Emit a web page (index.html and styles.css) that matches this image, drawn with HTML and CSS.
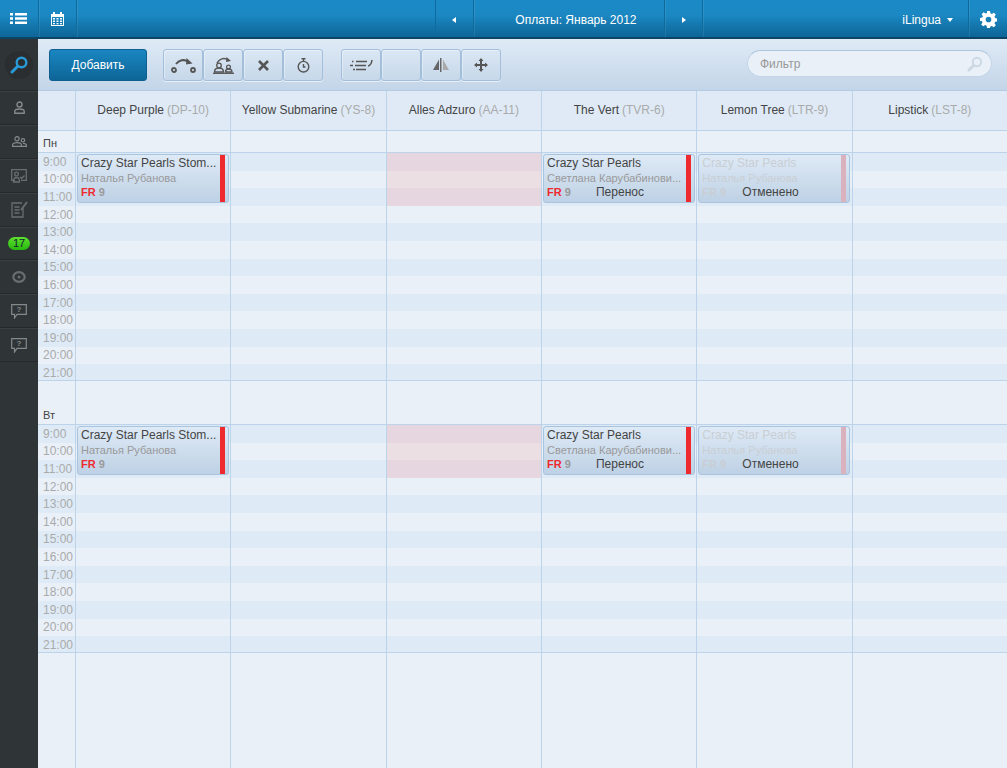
FILE: index.html
```html
<!DOCTYPE html>
<html lang="ru">
<head>
  <meta charset="UTF-8">
  <meta name="viewport" content="width=device-width, initial-scale=1.0">
  <title>Оплаты: Январь 2012</title>
  <link rel="stylesheet" href="styles.css">
</head>
<body>
  <header class="topbar">
    <div class="top-cell top-first">
      <svg width="17" height="11" viewBox="0 0 17 11" fill="#fff"><path d="M0 0h3v2.500H0zM5 0h12v2.500H5zM0 4.200h3v2.600H0zM5 4.200h12v2.600H5zM0 8.500h3V11H0zM5 8.500h12V11H5z"/></svg>
    </div>
    <div class="top-cell">
      <svg width="13" height="14" viewBox="0 0 13 14" fill="#fff"><path d="M2 0h2v2h5V0h2v2h2v12H0V2h2zM1 5v8h11V5zM2 6h2v1.500H2zM5.500 6h2v1.500h-2zM9 6h2v1.500H9zM2 8.500h2V10H2zM5.500 8.500h2V10h-2zM9 8.500h2V10H9zM2 11h2v1.300H2zM5.500 11h2v1.300h-2zM9 11h2v1.300H9z" fill-rule="evenodd"/></svg>
    </div>
    <div class="top-space"></div>
    <div class="top-cell"><span class="arrow-left"></span></div>
    <div class="top-cell top-title">Оплаты: Январь 2012</div>
    <div class="top-cell"><span class="arrow-right"></span></div>
    <div class="top-cell top-user">iLingua <span class="caret"></span></div>
    <div class="top-cell">
      <svg width="17" height="17" viewBox="0 0 24 24" fill="#fff"><path fill-rule="evenodd" d="M10 0h4l.7 3.300 2 .8L19.500 2.300l2.800 2.800-1.800 2.800.8 2 3.300.7v4l-3.300.7-.8 2 1.800 2.800-2.800 2.800-2.800-1.800-2 .8L14 24h-4l-.7-3.300-2-.8-2.800 1.800-2.800-2.800 1.800-2.800-.8-2L0 14v-4l3.300-.7.8-2-1.800-2.800 2.800-2.800 2.800 1.800 2-.8zM12 8a4 4 0 1 0 0 8 4 4 0 0 0 0-8z"/></svg>
    </div>
  </header>

  <div class="layout">
    <nav class="sidebar">
      <div class="side-logo">
        <span class="logo-disc">
          <svg width="20" height="20" viewBox="0 0 20 20" fill="none"><circle cx="12.500" cy="7.500" r="4.800" stroke="#2a9ad6" stroke-width="2.400"/><path d="M8.500 11.500L3 17" stroke="#2a9ad6" stroke-width="3" stroke-linecap="round"/></svg>
        </span>
      </div>
      <div class="side-item">
        <svg width="11" height="13" viewBox="0 0 11 13" fill="none" stroke="#85898b" stroke-width="1.400"><circle cx="5.500" cy="3.500" r="2.500"/><path d="M.8 12.200v-2c0-1.500 1.800-2.200 4.700-2.200s4.700 .7 4.700 2.200v2z"/></svg>
      </div>
      <div class="side-item">
        <svg width="15" height="11" viewBox="0 0 15 11" fill="none" stroke="#85898b" stroke-width="1.200"><circle cx="5" cy="2.800" r="2.100"/><path d="M.6 10.400V9c0-1.500 1.500-2.400 4.400-2.400S9.400 7.500 9.400 9v1.400z"/><circle cx="11" cy="4.300" r="1.700"/><path d="M9.400 10.400h5V9.200c0-1.200-1.200-1.900-3.400-1.900"/></svg>
      </div>
      <div class="side-item">
        <svg width="16" height="14" viewBox="0 0 16 14" fill="none" stroke="#696e70" stroke-width="1.300"><path d="M4 11.300H.7V.7h14.600v10.600H10"/><circle cx="5.500" cy="5" r="1.900"/><path d="M2.500 13c0-3 1-4.500 3-4.500S8.500 10 8.500 13zM9 8l1.500 1.500 3-3"/></svg>
      </div>
      <div class="side-item">
        <svg width="17" height="17" viewBox="0 0 17 17" fill="none" stroke="#696e70" stroke-width="1.300"><path d="M12 7v9H1V2h10M3.500 6h5M3.500 9h5M3.500 12h5"/><path d="M10 9l6-8" stroke-width="1.800"/></svg>
      </div>
      <div class="side-item"><span class="count-badge">17</span></div>
      <div class="side-item">
        <svg width="14" height="12" viewBox="0 0 14 12" fill="none" stroke="#696e70"><ellipse cx="7" cy="6" rx="5.700" ry="4.800" stroke-width="2.200"/><circle cx="7" cy="6" r="1.500" fill="#696e70" stroke="none"/></svg>
      </div>
      <div class="side-item">
        <svg width="16" height="15" viewBox="0 0 16 15" fill="none" stroke="#85898b" stroke-width="1.200"><path d="M.7.700h14.600v9.600H6L3.500 14v-3.700H.7z"/><text class="q-mark" x="8" y="8.300">?</text></svg>
      </div>
      <div class="side-item">
        <svg width="16" height="15" viewBox="0 0 16 15" fill="none" stroke="#85898b" stroke-width="1.200"><path d="M.7.700h14.600v9.600H6L3.500 14v-3.700H.7z"/><text class="q-mark" x="8" y="8.300">?</text></svg>
      </div>
    </nav>

    <div class="content">
      <div class="toolbar">
        <button class="btn-add">Добавить</button>
        <div class="btn-group">
          <button class="btn-tool">
            <svg width="25" height="15" viewBox="0 0 25 15" fill="none" stroke="#555"><circle cx="3" cy="12" r="2" stroke-width="1.800"/><circle cx="22" cy="12" r="2" stroke-width="1.800"/><path d="M5 6c3-4 8-5 12-2.500" stroke-width="2"/><path d="M15.500 0l6 5.500-6.500 1z" fill="#555" stroke="none"/></svg>
          </button>
          <button class="btn-tool">
            <svg width="21" height="17" viewBox="0 0 21 17" fill="none" stroke="#555"><path d="M4 6c2-4 7-6 11-3" stroke-width="1.500"/><path d="M13.500 0l4.500 4-5 1z" fill="#555" stroke="none"/><circle cx="6" cy="8.500" r="2.300" stroke-width="1.300"/><path d="M1.500 15c0-3 2-4 4.500-4s4.500 1 4.500 4z" stroke-width="1.300"/><circle cx="15.500" cy="10" r="1.900" stroke-width="1.300"/><path d="M12.500 15c0-2.500 1-3 3-3s3.500 .5 3.500 3z" stroke-width="1.300"/><path d="M0 16.300h21" stroke-width="1.300"/></svg>
          </button>
          <button class="btn-tool">
            <svg width="11" height="11" viewBox="0 0 11 11" stroke="#555" stroke-width="2.600"><path d="M1 1l9 9M10 1l-9 9"/></svg>
          </button>
          <button class="btn-tool">
            <svg width="13" height="15" viewBox="0 0 13 15" fill="none" stroke="#555" stroke-width="1.400"><circle cx="6.500" cy="8.700" r="5.300"/><path d="M4.500 .8h4M6.500 1v2M6.500 6v3l2 0"/></svg>
          </button>
        </div>
        <div class="btn-group">
          <button class="btn-tool">
            <svg width="24" height="12" viewBox="0 0 24 12" fill="none" stroke="#555" stroke-width="1.500"><path d="M3 2.500h1.500M7 2.500h11M1 6.500h3M6 6.500h11M4 10.500h2M7 10.500h10"/><path d="M19 7c2.500-.5 3.500-2 4-6" stroke-width="1.500"/></svg>
          </button>
          <button class="btn-tool"></button>
          <button class="btn-tool">
            <svg width="16" height="14" viewBox="0 0 16 14"><path d="M6 1.500V12H0z" fill="#666"/><path d="M7 0h1.500v14H7z" fill="#666"/><path d="M10 1.500V12h6z" fill="#aaa"/></svg>
          </button>
          <button class="btn-tool">
            <svg width="14" height="14" viewBox="0 0 14 14" fill="#555"><path d="M7 0l2.500 3H8v3h3V4.500L14 7l-3 2.500V8H8v3h1.500L7 14l-2.500-3H6V8H3v1.500L0 7l3-2.500V6h3V3H4.500z"/></svg>
          </button>
        </div>
        <label class="filter">
          <span class="filter-text">Фильтр</span>
          <svg width="16" height="16" viewBox="0 0 16 16" fill="none" stroke="#ccd8e4"><circle cx="10" cy="6" r="4.200" stroke-width="2"/><path d="M6.500 9.500L2 14" stroke-width="3" stroke-linecap="round"/></svg>
        </label>
      </div>

      <div class="grid-head">
        <div class="head-cell head-time"></div>
        <div class="head-cell">Deep Purple <span class="code">(DP-10)</span></div>
        <div class="head-cell">Yellow Submarine <span class="code">(YS-8)</span></div>
        <div class="head-cell">Alles Adzuro <span class="code">(AA-11)</span></div>
        <div class="head-cell">The Vert <span class="code">(TVR-6)</span></div>
        <div class="head-cell">Lemon Tree <span class="code">(LTR-9)</span></div>
        <div class="head-cell">Lipstick <span class="code">(LST-8)</span></div>
      </div>

      <div id="days"></div>
      <div class="grid-rest">
        <div></div><div></div><div></div><div></div><div></div><div></div><div></div>
      </div>
    </div>
  </div>

  <script>
    const hours = ["9:00","10:00","11:00","12:00","13:00","14:00","15:00","16:00","17:00","18:00","19:00","20:00","21:00"];
    const days = [{ name: "Пн", cls: "day-first" }, { name: "Вт", cls: "day-second" }];

    const events = {
      1: { title: "Crazy Star Pearls Stom...", teacher: "Наталья Рубанова", note: "" },
      4: { title: "Crazy Star Pearls", teacher: "Светлана Карубабинови...", note: "Перенос" },
      5: { title: "Crazy Star Pearls", teacher: "Наталья Рубанова", note: "Отменено", cancelled: true }
    };

    function eventHtml(ev) {
      return `<div class="event ${ev.cancelled ? "cancelled" : ""}">
        <div class="ev-body">
          <div class="ev-title">${ev.title}</div>
          <div class="ev-teacher">${ev.teacher}</div>
          <div class="ev-foot"><span class="ev-level"><b>FR</b> 9</span><span class="ev-note">${ev.note}</span></div>
        </div>
        <div class="ev-flag"></div>
      </div>`;
    }

    document.getElementById("days").innerHTML = days.map((day) => {
      let html = `<div class="day-label ${day.cls}"><div class="day-name">${day.name}</div>`;
      for (let c = 0; c < 6; c++) html += "<div></div>";
      html += `</div><div class="day-rows">`;
      hours.forEach((h, i) => {
        html += `<div class="row ${i % 2 ? "" : "row-alt"}"><div class="time">${h}</div>`;
        for (let c = 1; c <= 6; c++) {
          const blocked = c === 3 && i < 3 ? "blocked" : "";
          html += `<div class="cell ${blocked}">${i === 0 && events[c] ? eventHtml(events[c]) : ""}</div>`;
        }
        html += "</div>";
      });
      return html + "</div>";
    }).join("");
  </script>
</body>
</html>
```

FILE: styles.css
```css
* {
  box-sizing: border-box;
}
html, body {
  height: 100%;
}
body {
  margin: 0;
  font-family: "Liberation Sans", Arial, sans-serif;
  font-size: 12px;
  color: #444;
  background: #e9f0f8;
  overflow: hidden;
}

/* top bar */
.topbar {
  display: flex;
  height: 39px;
  background: linear-gradient(#1a8ac6, #1b88c3 40%, #0e6597);
  border-bottom: 2px solid #0b4464;
  color: #fff;
}
.top-cell {
  width: 38px;
  display: flex;
  align-items: center;
  justify-content: center;
  border-right: 1px solid #0f6a9e;
  box-shadow: 1px 0 0 rgba(255, 255, 255, 0.08);
}
.top-first {
  width: 39px;
}
.top-space {
  width: 359px;
  border-right: 1px solid #0f6a9e;
}
.top-space ~ .top-cell {
  padding-top: 2px;
}
.top-title {
  width: 192px;
  padding-left: 14px;
}
.top-user {
  width: 266px;
  justify-content: flex-end;
  padding-right: 15px;
  gap: 6px;
}
.top-user + .top-cell {
  border-right: none;
  box-shadow: none;
}
.arrow-left, .arrow-right, .caret {
  width: 0;
  height: 0;
  border-style: solid;
}
.arrow-left {
  border-width: 3.500px 4px 3.500px 0;
  border-color: transparent #fff transparent transparent;
}
.arrow-right {
  border-width: 3.500px 0 3.500px 4px;
  border-color: transparent transparent transparent #fff;
}
.caret {
  border-width: 4px 3.500px 0 3.500px;
  border-color: #fff transparent transparent transparent;
}

.layout {
  display: flex;
  height: 729px;
}

/* sidebar */
.sidebar {
  width: 38px;
  flex: none;
  background: #2f3436;
}
.side-logo {
  height: 52px;
  display: flex;
  align-items: center;
  justify-content: center;
  border-bottom: 1px solid #26292b;
}
.logo-disc {
  width: 28px;
  height: 28px;
  margin-top: 1px;
  border-radius: 50%;
  background: #2a2e30;
  display: flex;
  align-items: center;
  justify-content: center;
}
.side-item {
  height: 33.900px;
  display: flex;
  align-items: center;
  justify-content: center;
  border-top: 1px solid #3b4042;
  border-bottom: 1px solid #26292b;
}
.count-badge {
  width: 22px;
  height: 13px;
  border-radius: 7px;
  background: linear-gradient(#5fe02e, #27b80f);
  color: #123;
  font-size: 11px;
  line-height: 13px;
  text-align: center;
}
.q-mark {
  font-size: 8px;
  font-weight: bold;
  fill: #85898b;
  stroke: none;
  text-anchor: middle;
}

/* toolbar */
.content {
  width: 969px;
  display: flex;
  flex-direction: column;
}
.toolbar {
  height: 52px;
  flex: none;
  display: flex;
  align-items: flex-start;
  padding: 10px 15px 0 11px;
  background: linear-gradient(#dfeaf6, #c3d5e8);
  border-bottom: 1px solid #b3cce4;
}
button {
  font-family: inherit;
  font-size: 12px;
  padding: 0;
  cursor: pointer;
}
.btn-add {
  width: 98px;
  height: 32px;
  color: #fff;
  border: 1px solid #0e5f90;
  border-radius: 3px;
  background: linear-gradient(#1a86c1, #0e6597);
  margin-right: 16px;
}
.btn-group {
  display: flex;
  margin-right: 18px;
}
.btn-tool {
  width: 40px;
  height: 32px;
  display: flex;
  align-items: center;
  justify-content: center;
  background: linear-gradient(#dbe7f3, #c6d8ea);
  border: 1px solid #a3bfdb;
  border-radius: 3px;
  box-shadow: inset 1px 1px 0 rgba(255, 255, 255, 0.35), 0 1px 0 rgba(255, 255, 255, 0.6);
}
.filter {
  margin: 1px 0 0 auto;
  width: 245px;
  height: 27px;
  border-radius: 14px;
  background: #e9f0f8;
  border: 1px solid #c3d5e8;
  border-top-color: #aec5dc;
  display: flex;
  align-items: center;
  justify-content: space-between;
  padding: 0 8px 0 12px;
}
.filter-text {
  color: #999;
}

/* grid */
.grid-head, .day-label, .row, .grid-rest {
  display: grid;
  grid-template-columns: 37px repeat(6, 1fr);
}
.grid-head {
  height: 40px;
  flex: none;
  background: #dfeaf6;
  border-bottom: 1px solid #bcd3ea;
}
.head-cell {
  display: flex;
  align-items: center;
  justify-content: center;
  gap: 3px;
  padding-bottom: 1px;
  border-left: 1px solid #bcd3ea;
  white-space: nowrap;
}
.head-time {
  border-left: none;
}
.code {
  color: #aaa;
}
.day-label {
  border-bottom: 1px solid #bcd3ea;
}
.day-first {
  height: 22px;
}
.day-second {
  height: 44px;
}
.day-label > div {
  border-left: 1px solid #bcd3ea;
}
.day-label > .day-name {
  border-left: none;
  align-self: end;
  padding: 0 0 3px 5px;
  font-size: 11px;
  color: #444;
}
.day-rows {
  height: 228px;
  overflow: hidden;
  border-bottom: 1px solid #bcd3ea;
}
.row {
  height: 17.600px;
  background: #e9f0f8;
}
.row-alt {
  background: #deeaf6;
}
.time {
  color: #aaa;
  padding-left: 5px;
  display: flex;
  align-items: center;
  white-space: nowrap;
}
.cell {
  position: relative;
  border-left: 1px solid #bcd3ea;
}
.cell.blocked {
  background: #ecdfe3;
}
.row-alt .cell.blocked {
  background: #e5d6e0;
}
.grid-rest {
  flex: 1;
}
.grid-rest > div {
  border-left: 1px solid #bcd3ea;
}
.grid-rest > div:first-child {
  border-left: none;
}

/* events */
.event {
  position: absolute;
  z-index: 1;
  top: 1px;
  left: 1px;
  width: 152px;
  height: 49px;
  display: flex;
  padding: 0 3px 0 0;
  border: 1px solid #a9c4de;
  border-radius: 3px;
  background: linear-gradient(#deeaf6, #bed1e5);
}
.ev-body {
  flex: 1;
  min-width: 0;
  padding: 1px 0 0 3px;
}
.ev-flag {
  width: 5px;
  flex: none;
  background: #ee2a2e;
}
.ev-title {
  line-height: 15px;
  color: #444;
  white-space: nowrap;
}
.ev-teacher {
  line-height: 14px;
  font-size: 11px;
  color: #999;
  white-space: nowrap;
}
.ev-foot {
  display: flex;
  line-height: 15px;
  font-size: 11px;
  color: #999;
}
.ev-level {
  width: 49px;
  flex: none;
  font-weight: bold;
}
.ev-level b {
  color: #ee2a2e;
}
.ev-note {
  font-size: 12px;
  color: #444;
}
.cancelled .ev-title, .cancelled .ev-teacher, .cancelled .ev-level, .cancelled .ev-level b {
  color: #c9ced4;
}
.cancelled .ev-flag {
  background: #d9b2bd;
}
.cancelled .ev-level {
  width: 40px;
}
```
